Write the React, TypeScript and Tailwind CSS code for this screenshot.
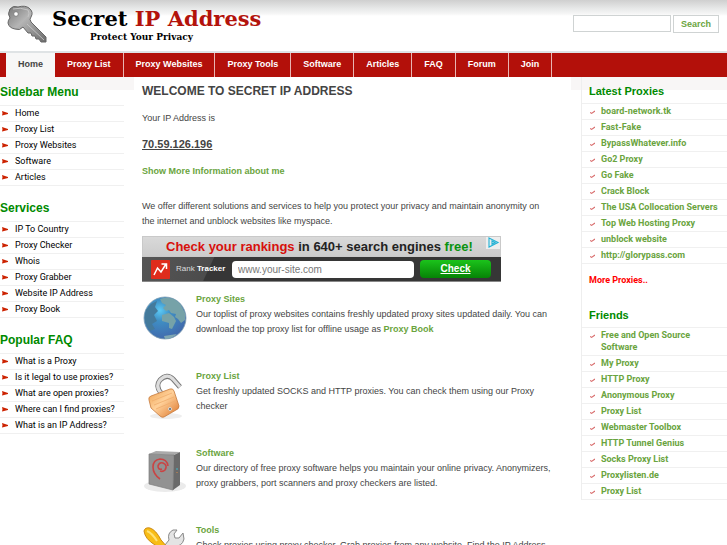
import type { ReactNode } from 'react'

interface Feature {
  title: string
  text: ReactNode
  icon: ReactNode
}

const navItems = ['Home', 'Proxy List', 'Proxy Websites', 'Proxy Tools', 'Software', 'Articles', 'FAQ', 'Forum', 'Join']

const sidebarSections = [
  { title: 'Sidebar Menu', links: ['Home', 'Proxy List', 'Proxy Websites', 'Software', 'Articles'] },
  {
    title: 'Services',
    links: ['IP To Country', 'Proxy Checker', 'Whois', 'Proxy Grabber', 'Website IP Address', 'Proxy Book']
  },
  {
    title: 'Popular FAQ',
    links: [
      'What is a Proxy',
      'Is it legal to use proxies?',
      'What are open proxies?',
      'Where can I find proxies?',
      'What is an IP Address?'
    ]
  }
]

const latestProxies = [
  'board-network.tk',
  'Fast-Fake',
  'BypassWhatever.info',
  'Go2 Proxy',
  'Go Fake',
  'Crack Block',
  'The USA Collocation Servers',
  'Top Web Hosting Proxy',
  'unblock website',
  'http://glorypass.com'
]

const friends = [
  'Free and Open Source Software',
  'My Proxy',
  'HTTP Proxy',
  'Anonymous Proxy',
  'Proxy List',
  'Webmaster Toolbox',
  'HTTP Tunnel Genius',
  'Socks Proxy List',
  'Proxylisten.de',
  'Proxy List'
]

function KeyIcon() {
  return (
    <svg className="w-10 h-10 shrink-0" viewBox="0 0 40 40" fill="none">
      <defs>
        <linearGradient id="key" x1="0" y1="0" x2="1" y2="1">
          <stop offset="0" stopColor="#777" />
          <stop offset="0.4" stopColor="#b5b5b5" />
          <stop offset="1" stopColor="#6b6b6b" />
        </linearGradient>
      </defs>
      <path
        d="M3 4 Q6 0 11 2 Q18 0 22 3 Q27 7 24 12 Q22 14 24 17 L39 32 L39 37 L34 37 L32 34 L29 34 L28 31 L25 31 L24 28 L21 28 L16 22 Q13 26 8 24 Q2 23 1 18 Q1 15 3 13 Q0 9 3 4 Z"
        fill="url(#key)"
        stroke="#666"
        strokeWidth="1"
      />
      <path d="M6 4 Q13 2 21 5 Q23 8 21 12" stroke="#c4c4c4" strokeWidth="1" />
      <path d="M20 19 L37 35" stroke="#ccc" strokeWidth="0.8" />
      <circle cx="9" cy="9" r="2.3" fill="#fff" stroke="#777" strokeWidth="0.8" />
    </svg>
  )
}

function ArrowBullet() {
  return (
    <svg className="w-[6px] h-[5px] mt-[5px] ml-[2px] mr-[7px] shrink-0" viewBox="0 0 6 5">
      <path d="M0 0 L6 2 L6 3 L0 4.5 L0.5 2.3 Z" fill="#cc2200" />
    </svg>
  )
}

function CheckBullet() {
  return (
    <svg className="w-[5px] h-[5px] mt-[5px] ml-[1px] mr-[6px] shrink-0" viewBox="0 0 5 5" fill="none">
      <path d="M0 2.4 L1.6 3.4 L5 1" stroke="#d86a6a" strokeWidth="1.1" />
    </svg>
  )
}

function GlobeIcon() {
  return (
    <svg className="w-[45px] h-[45px]" viewBox="0 0 45 45">
      <defs>
        <radialGradient id="sea" cx="0.38" cy="0.32" r="0.7">
          <stop offset="0" stopColor="#5ccaf5" />
          <stop offset="0.35" stopColor="#3f8fc4" />
          <stop offset="1" stopColor="#4169ac" />
        </radialGradient>
      </defs>
      <circle cx="23" cy="22" r="21" fill="url(#sea)" stroke="#7e9db0" strokeWidth="0.8" />
      <path d="M4 14 L9 8 L15 5 L13 11 L16 15 L12 19 L15 25 L10 28 L13 33 L8 35 Q0 25 4 14 Z" fill="#447a9b" />
      <path d="M18 3 Q31 -1 39 9 L43 17 L43 24 L39 27 L36 23 L33 21 L34 18 L29 17 L27 14 L24 15 L21 12 L24 9 L20 7 Z" fill="#76a2a8" />
      <path d="M20 19 L27 17 L32 21 L34 25 L30 33 L27 32 L27 27 L20 25 Z" fill="#76a2a8" />
      <path d="M22 40 L35 38 Q30 43 23 43 Z" fill="#80a8b2" />
    </svg>
  )
}

function LockIcon() {
  return (
    <svg className="w-[45px] h-[50px]" viewBox="0 0 45 50" fill="none">
      <defs>
        <linearGradient id="lock" x1="0" y1="0" x2="1" y2="1">
          <stop offset="0" stopColor="#eda04e" />
          <stop offset="0.45" stopColor="#ffd19a" />
          <stop offset="1" stopColor="#db7226" />
        </linearGradient>
      </defs>
      <ellipse cx="24" cy="43" rx="16" ry="3" fill="#eee" />
      <path d="M19 20 Q13 13 18 7 Q25 0 31 6 L38 14" stroke="#777" strokeWidth="5" />
      <path d="M19 20 Q13 13 18 7 Q25 0 31 6 L38 14" stroke="#ddd" strokeWidth="3.2" />
      <path d="M7 27 Q6 24 9 23 L28 16 Q31 15 32 18 L37 33 Q37 36 34 37 L22 44 Q20 45 18 43 L9 35 Z" fill="url(#lock)" stroke="#c57a3e" strokeWidth="0.8" />
      <path d="M10 28 L30 20 M12 32 L32 24 M14 36 L33 28" stroke="#efac6c" strokeWidth="0.8" />
      <circle cx="28" cy="36" r="1.5" fill="#555" stroke="#ddd" />
    </svg>
  )
}

function SoftwareIcon() {
  return (
    <svg className="w-[45px] h-[45px]" viewBox="0 0 45 45" fill="none">
      <ellipse cx="23" cy="36" rx="21" ry="6" fill="#ebebeb" />
      <path d="M7 4 L14 1 L38 2 L32 5 Z" fill="#aaa" />
      <path d="M7 4 L32 5 L31 40 L7 34 Z" fill="#929292" stroke="#7d7d7d" strokeWidth="0.7" />
      <path d="M32 5 L38 2 L38 35 L31 40 Z" fill="#6a6a6a" />
      <path
        d="M20 19 Q16 20 16 16 Q17 12 21 13 Q26 15 23 20 M26 16 Q25 9 18 9 Q11 10 11 17 Q11 24 18 29 M23 20 Q21 22 18 21"
        stroke="#c94444"
        strokeWidth="1.6"
      />
      <path d="M35 18 v2" stroke="#40b7c9" />
      <path d="M35 22 v1" stroke="#d88945" />
    </svg>
  )
}

function ToolsIcon() {
  return (
    <svg className="w-[45px] h-[45px]" viewBox="0 0 45 45" fill="none">
      <path
        d="M31 3 Q25 6 27 13 L10 34 L15 39 L32 19 Q40 20 42 12 L41 6 L37 11 L33 11 L32 7 L35 3 Z"
        fill="#e4e4e4"
        stroke="#888"
      />
      <path d="M2 4 Q3 0 8 1 Q14 3 19 13 L26 21 L22 24 L13 18 Q3 12 2 4 Z" fill="#f8bd16" stroke="#cc8a12" />
      <path d="M5 4 Q10 6 15 14" stroke="#ffe274" strokeWidth="2" />
      <path d="M23 21 L39 38" stroke="#999" strokeWidth="3" />
    </svg>
  )
}

const features: Feature[] = [
  {
    title: 'Proxy Sites',
    text: (
      <>
        Our toplist of proxy websites contains freshly updated proxy sites updated daily. You can
        <br />
        download the top proxy list for offline usage as{' '}
        <a href="#proxy-book" className="font-bold text-[#6aa43e]">
          Proxy Book
        </a>
      </>
    ),
    icon: <GlobeIcon />
  },
  {
    title: 'Proxy List',
    text: (
      <>
        Get freshly updated SOCKS and HTTP proxies. You can check them using our Proxy
        <br />
        checker
      </>
    ),
    icon: <LockIcon />
  },
  {
    title: 'Software',
    text: (
      <>
        Our directory of free proxy software helps you maintain your online privacy. Anonymizers,
        <br />
        proxy grabbers, port scanners and proxy checkers are listed.
      </>
    ),
    icon: <SoftwareIcon />
  },
  {
    title: 'Tools',
    text: 'Check proxies using proxy checker, Grab proxies from any website, Find the IP Address',
    icon: <ToolsIcon />
  }
]

function Header() {
  return (
    <header className="flex items-start justify-between h-[53px] border-b-2 border-[#dfe3e5] bg-[linear-gradient(#cfcfcf,#e6e7e7_8px,#f6f6f6_14px,#ffffff_16px)]">
      <a href="#home" className="flex pl-[7px] pt-[5px]">
        <KeyIcon />
        <div className="pl-[5px] font-['DejaVu_Serif',serif] font-bold text-black">
          <div className="text-[21px] leading-7 whitespace-nowrap">
            Secret <span className="text-[#b3130c]">IP Address</span>
          </div>
          <div className="pl-[38px] text-[9px] leading-[9px] whitespace-nowrap">Protect Your Privacy</div>
        </div>
      </a>
      <form className="flex gap-[2px] pt-[15px] pr-2" onSubmit={(e) => e.preventDefault()}>
        <input type="text" aria-label="Search" className="w-[98px] h-[17px] px-1 border border-[#cfd3d3] bg-white" />
        <button type="submit" className="w-[46px] h-[18px] border border-[#cfd3d3] bg-white font-bold text-[9px] leading-4 text-[#6aa43e]">
          Search
        </button>
      </form>
    </header>
  )
}

function NavBar() {
  return (
    <nav className="flex h-6 pl-[6px] bg-[#b3100a] text-[9px] leading-[23px] font-bold text-white">
      {navItems.map((item, i) => (
        <a
          key={item}
          href="#nav"
          className={i === 0 ? 'px-3 bg-[#f7f7f7] text-[#444444]' : 'px-3 border-r border-[#e9b5b2]'}
        >
          {item}
        </a>
      ))}
    </nav>
  )
}

function Sidebar() {
  return (
    <aside className="w-[134px] shrink-0 pt-[5px] pr-[10px] bg-[linear-gradient(#f8f6f6_13px,#ffffff_13px)]">
      {sidebarSections.map((section) => (
        <section key={section.title} className="mb-3">
          <h2 className="mb-[3px] text-[12px] leading-5 font-bold text-[#008a00]">{section.title}</h2>
          <ul className="border-t border-[#f0f0f0]">
            {section.links.map((link) => (
              <li key={link} className="flex h-4 border-b border-[#f0f0f0]">
                <ArrowBullet />
                <a href="#page" className="font-[Roboto,sans-serif] text-[9px] leading-[15px] text-black whitespace-nowrap">
                  {link}
                </a>
              </li>
            ))}
          </ul>
        </section>
      ))}
    </aside>
  )
}

function Banner() {
  return (
    <div className="max-w-[359px] h-[46px] mt-[7px] border-b border-[#888888]">
      <div className="flex justify-between h-[21px] border border-[#c9c9c9] bg-[linear-gradient(#d9d9d9,#cccccc)]">
        <p className="pl-[23px] text-[13px] leading-[19px] font-bold text-[#222222] whitespace-nowrap">
          <span className="text-[#d8100c]">Check your rankings</span> in 640+ search engines{' '}
          <span className="text-[#0a9310]">free!</span>
        </p>
        <svg className="w-[14px] h-[12px] bg-[#eeeeee]" viewBox="0 0 14 12" fill="none">
          <path d="M3 1 L12 5.5 L3 10 Z M6 4 L9 5.5 L6 7 Z" stroke="#20b1d5" strokeWidth="1.1" />
        </svg>
      </div>
      <div className="flex items-center h-6 pl-[9px] pr-[10px] bg-[linear-gradient(115deg,#565656_0,#4c4c4c_65px,#363636_66px)]">
        <svg className="w-[19px] h-[19px] shrink-0" viewBox="0 0 19 19" fill="none">
          <rect width="19" height="19" rx="1" fill="#df2c1c" />
          <path d="M3 15 L6.5 8 L10 12 L15 4 M10.5 4 H15.5 V9" stroke="#fff" strokeWidth="1.5" />
        </svg>
        <span className="w-[54px] ml-[6px] text-[8px] leading-4 text-[#dddddd] whitespace-nowrap">
          Rank <b className="text-white">Tracker</b>
        </span>
        <input
          type="text"
          aria-label="Your site"
          placeholder="www.your-site.com"
          className="w-[182px] min-w-0 h-[17px] ml-[2px] px-[6px] rounded bg-white text-[10px] leading-4 placeholder:text-[#777777]"
        />
        <button
          type="button"
          className="w-[71px] h-[18px] ml-auto rounded bg-[linear-gradient(#1bc31b,#068306)] text-[10px] leading-4 font-bold text-white underline"
        >
          Check
        </button>
      </div>
    </div>
  )
}

function Main() {
  return (
    <main className="flex-1 min-w-0 pl-2 pr-[5px] text-[9px] leading-[15px] text-[#444444]">
      <h1 className="pt-1 text-[12px] leading-5 font-bold uppercase">Welcome to Secret IP Address</h1>
      <p className="mt-[10px]">Your IP Address is</p>
      <p className="mt-[11px] text-[11px] font-bold underline">70.59.126.196</p>
      <p className="mt-3">
        <a href="#info" className="font-bold text-[#6aa43e]">
          Show More Information about me
        </a>
      </p>
      <p className="mt-5">
        We offer different solutions and services to help you protect your privacy and maintain anonymity on
        <br />
        the internet and unblock websites like myspace.
      </p>
      <Banner />
      <div className="pt-[10px]">
        {features.map((feature) => (
          <article key={feature.title} className="flex gap-[9px] h-[77px]">
            <div className="w-[45px] shrink-0 pt-1">{feature.icon}</div>
            <div className="min-w-0">
              <h3 className="font-bold text-[#6aa43e]">{feature.title}</h3>
              <p>{feature.text}</p>
            </div>
          </article>
        ))}
      </div>
    </main>
  )
}

function LinkList({ title, links }: { title: string; links: string[] }) {
  return (
    <section>
      <h2 className="pl-[7px] mb-[2px] text-[11px] leading-5 font-bold text-[#008a00]">{title}</h2>
      <ul className="border-t border-[#f0f0f0]">
        {links.map((link, i) => (
          <li key={i} className="flex pl-[7px] pr-1 pt-px pb-[2px] border-b border-[#f0f0f0]">
            <CheckBullet />
            <a href="#site" className="font-[Roboto,sans-serif] text-[9px] leading-3 font-bold text-[#6aa43e]">
              {link}
            </a>
          </li>
        ))}
      </ul>
    </section>
  )
}

function RightColumn() {
  return (
    <aside className="w-[156px] shrink-0 pl-[10px] bg-[linear-gradient(#f8f6f6_13px,#ffffff_13px)]">
      <div className="pt-1 border-l border-[#eeeeee]">
        <LinkList title="Latest Proxies" links={latestProxies} />
        <p className="pl-[7px] pt-2 pb-[17px] text-[9px] leading-4 font-bold">
          <a href="#more" className="font-[Roboto,sans-serif] text-[#ff0000]">
            More Proxies..
          </a>
        </p>
        <LinkList title="Friends" links={friends} />
      </div>
    </aside>
  )
}

export default function App() {
  return (
    <div className="bg-white font-['Liberation_Sans',Arial,sans-serif]">
      <Header />
      <NavBar />
      <div className="flex">
        <Sidebar />
        <Main />
        <RightColumn />
      </div>
    </div>
  )
}
